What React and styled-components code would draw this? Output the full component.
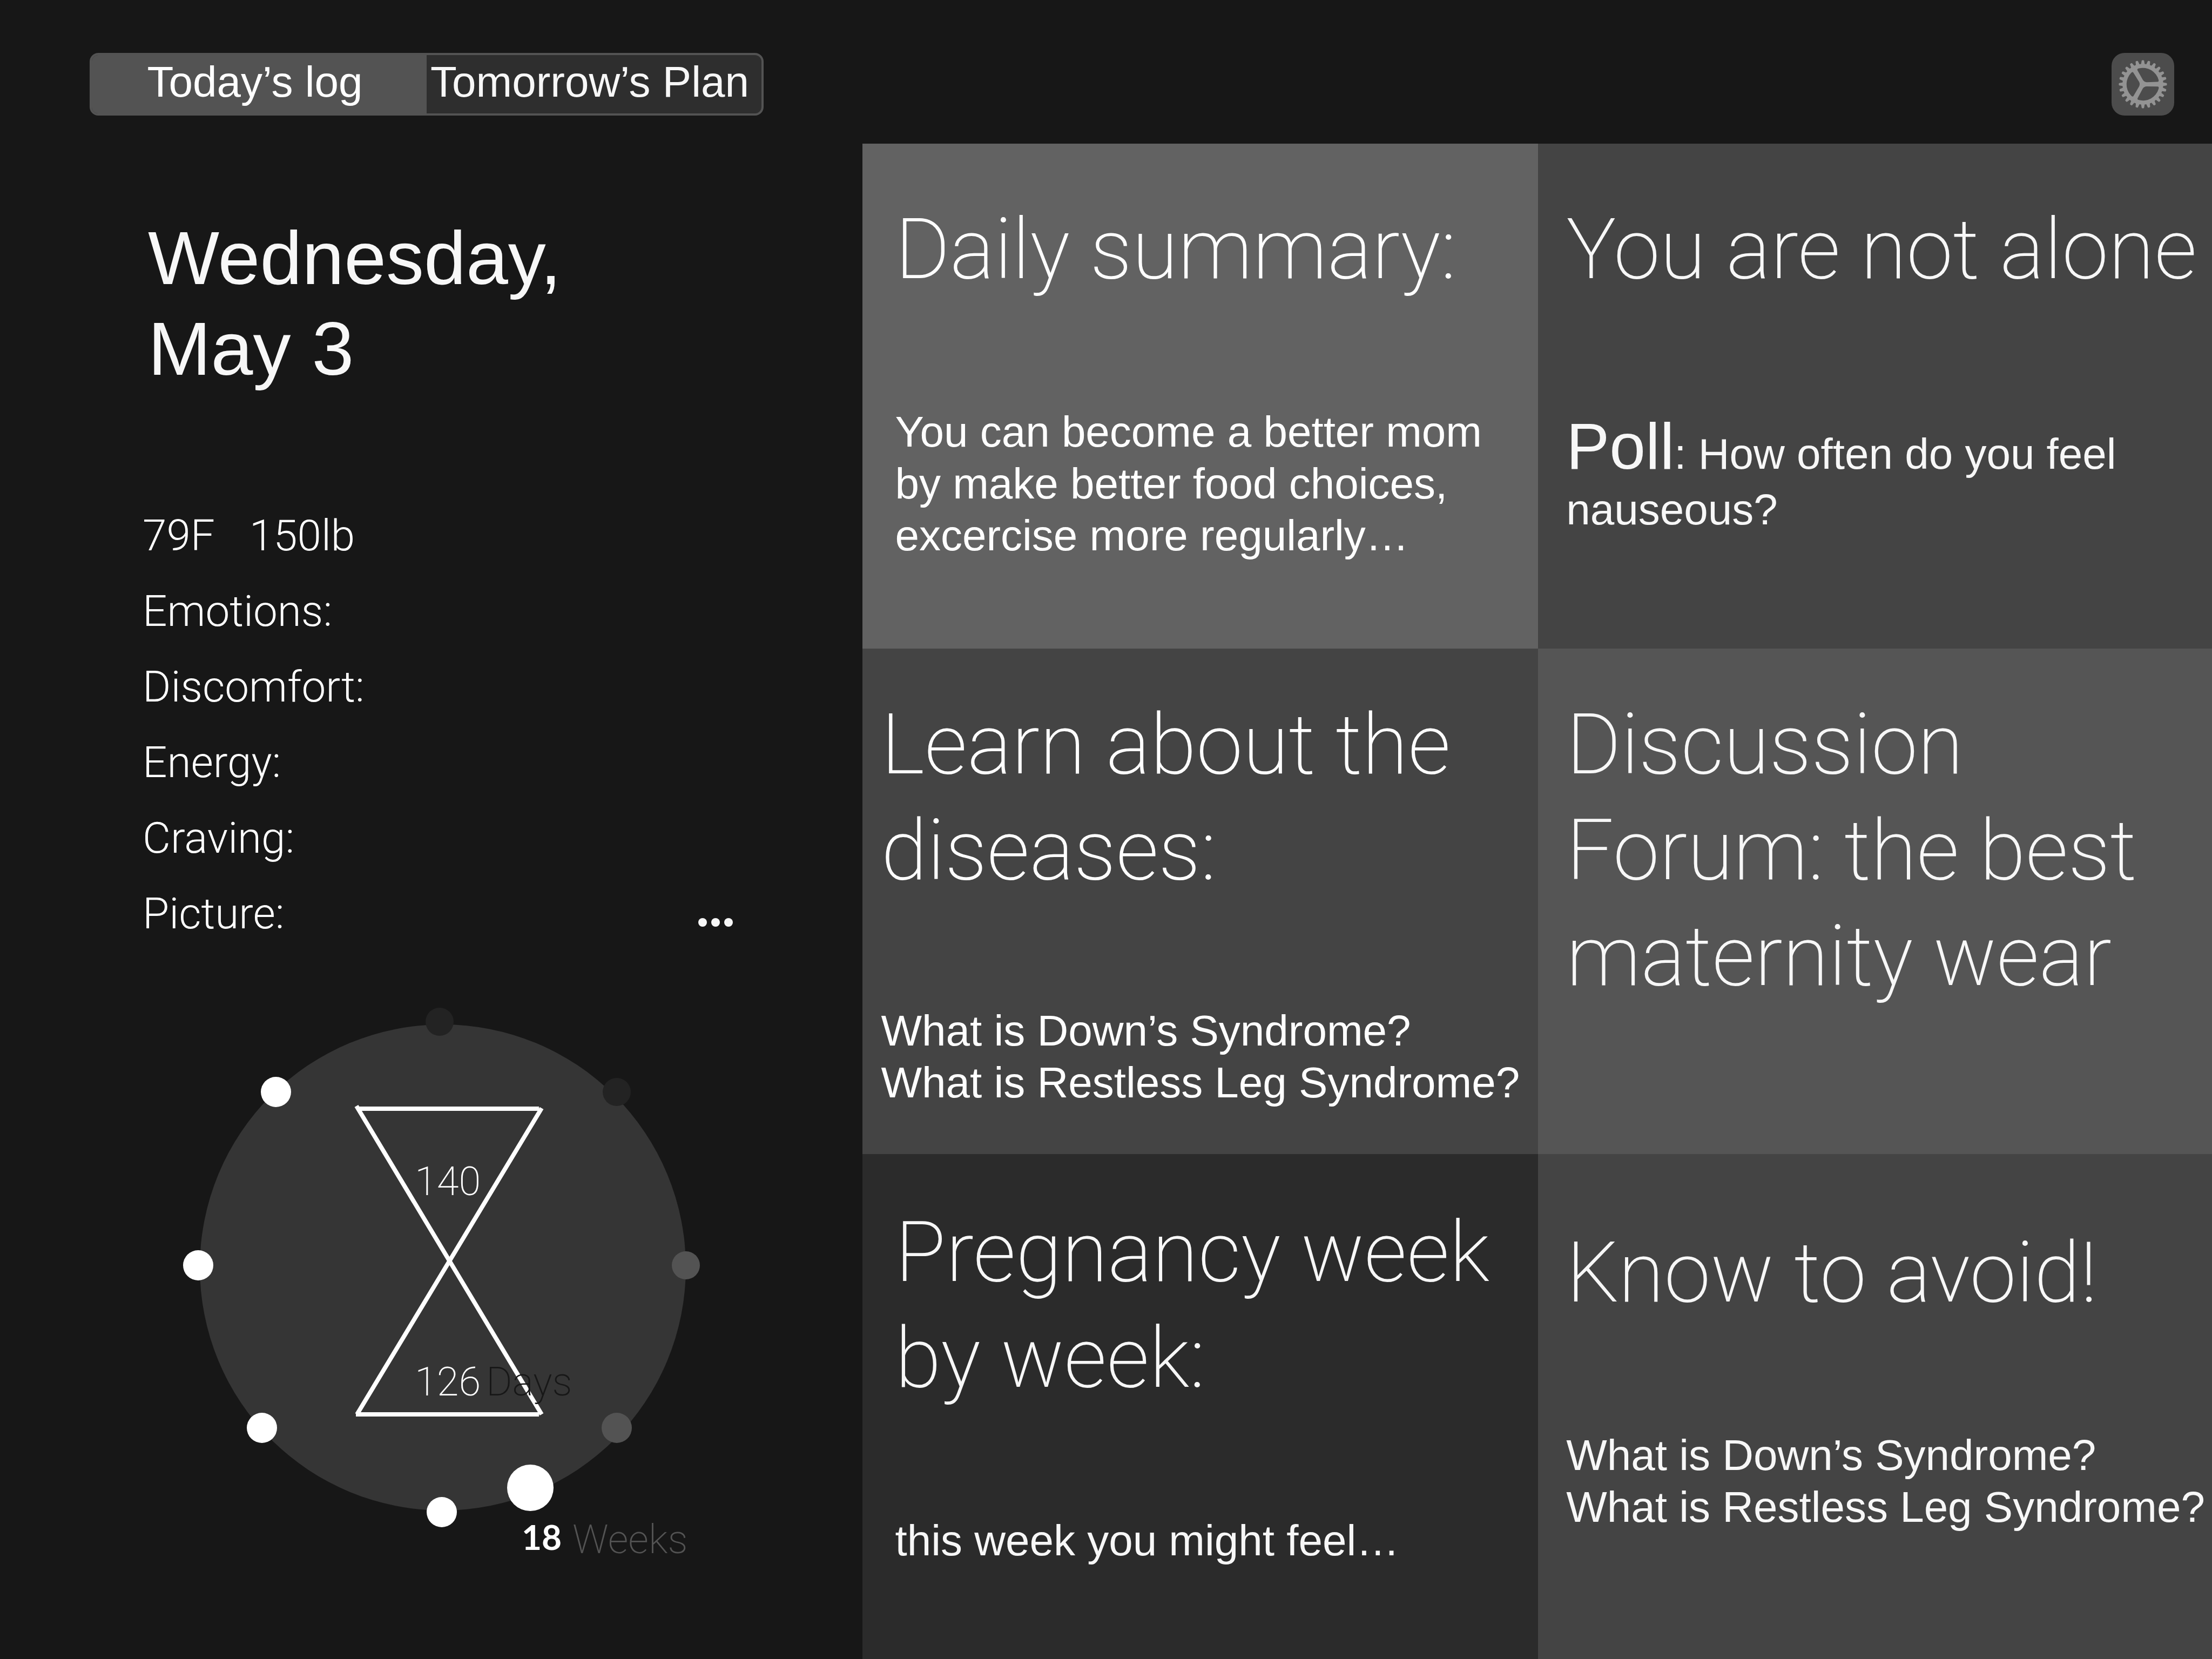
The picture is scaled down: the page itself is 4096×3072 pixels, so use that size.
import React, { useState } from "react";
import styled, { createGlobalStyle } from "styled-components";

const thin = `Roboto, "Liberation Sans", sans-serif`;
const regular = `"Liberation Sans", Arial, sans-serif`;

const GlobalStyle = createGlobalStyle`
  *, *::before, *::after { box-sizing: border-box; }
  body { margin: 0; background: #171717; }
  h1, h2, p, ul { margin: 0; padding: 0; font-weight: inherit; }
  button { border: 0; padding: 0; background: none; cursor: pointer; }
`;

const Page = styled.div`
  display: flex;
  flex-direction: column;
  min-height: 100vh;
  background: #171717;
  color: #f7f7f7;
  font-family: ${regular};
`;

const Header = styled.header`
  display: flex;
  justify-content: space-between;
  align-items: flex-start;
  height: 266px;
  padding: 98px 70px 0 166px;
`;

const Segments = styled.div`
  display: grid;
  grid-template-columns: 1fr 1fr;
  width: 1248px;
  height: 116px;
  border: 4px solid #535353;
  border-radius: 16px;
  background: #2e2e2e;
  overflow: hidden;
`;

const Segment = styled.button`
  padding: 0 16px 8px 0;
  background: ${(p) => (p.$active ? "#535353" : "transparent")};
  color: ${(p) => (p.$active ? "#ffffff" : "#f7f7f7")};
  font-family: ${regular};
  font-size: 80px;
  line-height: 96px;
  white-space: nowrap;
`;

const SettingsButton = styled.button`
  width: 116px;
  height: 116px;
  border-radius: 24px;
  background: #4c4c4c;

  svg { display: block; width: 100%; height: 100%; }
`;

const Main = styled.main`
  flex: 1;
  display: grid;
  grid-template-columns: 39% 1fr;
`;

const LogPanel = styled.section`
  padding: 128px 0 0 264px;
`;

const DateHeading = styled.h1`
  padding-left: 10px;
  margin-bottom: 192px;
  font-size: 140px;
  line-height: 168px;
`;

const LogList = styled.ul`
  list-style: none;
  margin-bottom: 88px;
  padding-right: 240px;
`;

const LogRow = styled.li`
  display: flex;
  justify-content: space-between;
  color: #ffffff;
  font-family: ${thin};
  font-weight: 300;
  font-size: 80px;
  line-height: 140px;
`;

const Vitals = styled.span`
  display: flex;
  gap: 64px;
`;

const MoreButton = styled.button`
  display: flex;
  align-items: center;
  gap: 8px;
  padding-top: 32px;
`;

const Dot = styled.span`
  width: 16px;
  height: 16px;
  border-radius: 50%;
  background: #f7f7f7;
`;

const Dial = styled.svg`
  display: block;
  width: 1000px;
  height: 1060px;
  margin-left: 56px;
`;

const Tiles = styled.section`
  display: grid;
  grid-template-columns: 1251fr 1248fr;
  grid-template-rows: repeat(3, minmax(0, 1fr));
`;

const Tile = styled.article`
  min-width: 0;
  padding: ${(p) => p.$top}px 0 0 ${(p) => p.$left}px;
  background: ${(p) => p.$shade};
  color: ${(p) => (p.$bright ? "#ffffff" : "#f7f7f7")};
`;

const TileTitle = styled.h2`
  font-family: ${thin};
  font-weight: 200;
  font-size: 155px;
  line-height: 196px;
  white-space: nowrap;
`;

const TileText = styled.p`
  margin-top: ${(p) => p.$gap || 192}px;
  font-size: 80px;
  line-height: 96px;
`;

const PollLabel = styled.span`
  font-size: 120px;
  line-height: 140px;
`;

const DialText = styled.text`
  font-family: ${thin};
  font-weight: 200;
  font-size: 74px;
`;

const WeekNumber = styled.text`
  font-family: Lato, "Liberation Sans", sans-serif;
  font-weight: 700;
  font-size: 64px;
`;

const teeth = Array.from({ length: 24 }, (_, i) => i * 15);

function GearIcon() {
  return (
    <svg viewBox="-181 -181 362 362" aria-hidden="true">
      <g fill="#939393">
        <circle r="118" />
        {teeth.map((a) => (
          <path key={a} transform={`rotate(${a})`} d="M-11,-114 L-7,-136 Q-6,-139 -3,-139 L3,-139 Q6,-139 7,-136 L11,-114 Z" />
        ))}
      </g>
      {[0, 120, 240].map((a) => (
        <path
          key={a}
          transform={`rotate(${a})`}
          fill="#4c4c4c"
          d="M84,-14 L22,-12 Q8,-13 0,-25 L-31,-80 Q-36,-89 -22,-92 A94 94 0 0 1 91,-24 Q93,-14 84,-14 Z"
        />
      ))}
    </svg>
  );
}

const weekDots = [
  { x: 814, y: 1892, r: 26, fill: "#232323" },
  { x: 1142, y: 2022, r: 26, fill: "#232323" },
  { x: 1270, y: 2343, r: 26, fill: "#535353" },
  { x: 1142, y: 2644, r: 28, fill: "#535353" },
  { x: 982, y: 2755, r: 43, fill: "#ffffff" },
  { x: 818, y: 2800, r: 28, fill: "#ffffff" },
  { x: 485, y: 2644, r: 28, fill: "#ffffff" },
  { x: 367, y: 2343, r: 28, fill: "#ffffff" },
  { x: 511, y: 2022, r: 28, fill: "#ffffff" },
];

function WeekDial() {
  return (
    <Dial viewBox="320 1850 1000 1060" role="img" aria-label="18 weeks, 126 days">
      <circle cx="820" cy="2347" r="450" fill="#353535" />
      {weekDots.map((d) => (
        <circle key={`${d.x}-${d.y}`} cx={d.x} cy={d.y} r={d.r} fill={d.fill} />
      ))}
      <g stroke="#ffffff" strokeWidth="8">
        <path d="M661,2053 H998" />
        <path d="M660,2048 L1003,2619" />
        <path d="M1003,2052 L661,2619" />
        <path d="M659,2619 H998" />
      </g>
      <DialText x="768" y="2213" fill="#ffffff">140</DialText>
      <DialText x="768" y="2584" fill="#ffffff">126</DialText>
      <DialText x="900" y="2584" fill="#171717">Days</DialText>
      <WeekNumber x="966" y="2870" fill="#ffffff">18</WeekNumber>
      <DialText x="1060" y="2876" fill="#535353">Weeks</DialText>
    </Dial>
  );
}

const logFields = ["Emotions:", "Discomfort:", "Energy:", "Craving:"];

export default function App() {
  const [tab, setTab] = useState("today");
  return (
    <>
      <GlobalStyle />
      <Page>
        <Header>
          <Segments role="tablist">
            <Segment role="tab" aria-selected={tab === "today"} $active={tab === "today"} onClick={() => setTab("today")}>
              Today’s log
            </Segment>
            <Segment role="tab" aria-selected={tab === "plan"} $active={tab === "plan"} onClick={() => setTab("plan")}>
              Tomorrow’s Plan
            </Segment>
          </Segments>
          <SettingsButton aria-label="Settings">
            <GearIcon />
          </SettingsButton>
        </Header>
        <Main>
          <LogPanel>
            <DateHeading>
              Wednesday,
              <br />
              May 3
            </DateHeading>
            <LogList>
              <LogRow>
                <Vitals>
                  <span>79F</span>
                  <span>150lb</span>
                </Vitals>
              </LogRow>
              {logFields.map((f) => (
                <LogRow key={f}>{f}</LogRow>
              ))}
              <LogRow>
                Picture:
                <MoreButton aria-label="More">
                  <Dot />
                  <Dot />
                  <Dot />
                </MoreButton>
              </LogRow>
            </LogList>
            <WeekDial />
          </LogPanel>
          <Tiles>
            <Tile $shade="#626262" $top={98} $left={60} $bright>
              <TileTitle>Daily summary:</TileTitle>
              <TileText>
                You can become a better mom
                <br />
                by make better food choices,
                <br />
                excercise more regularly…
              </TileText>
            </Tile>
            <Tile $shade="#444444" $top={98} $left={52}>
              <TileTitle>You are not alone</TileTitle>
              <TileText $gap={196}>
                <PollLabel>Poll</PollLabel>: How often do you feel
                <br />
                nauseous?
              </TileText>
            </Tile>
            <Tile $shade="#444444" $top={80} $left={34} $bright>
              <TileTitle>
                Learn about the
                <br />
                diseases:
              </TileTitle>
              <TileText $gap={188}>
                What is Down’s Syndrome?
                <br />
                What is Restless Leg Syndrome?
              </TileText>
            </Tile>
            <Tile $shade="#555555" $top={80} $left={52}>
              <TileTitle>
                Discussion
                <br />
                Forum: the best
                <br />
                maternity wear
              </TileTitle>
            </Tile>
            <Tile $shade="#2b2b2b" $top={84} $left={60}>
              <TileTitle>
                Pregnancy week
                <br />
                by week:
              </TileTitle>
              <TileText>this week you might feel…</TileText>
            </Tile>
            <Tile $shade="#444444" $top={122} $left={52}>
              <TileTitle>Know to avoid!</TileTitle>
              <TileText>
                What is Down’s Syndrome?
                <br />
                What is Restless Leg Syndrome?
              </TileText>
            </Tile>
          </Tiles>
        </Main>
      </Page>
    </>
  );
}
